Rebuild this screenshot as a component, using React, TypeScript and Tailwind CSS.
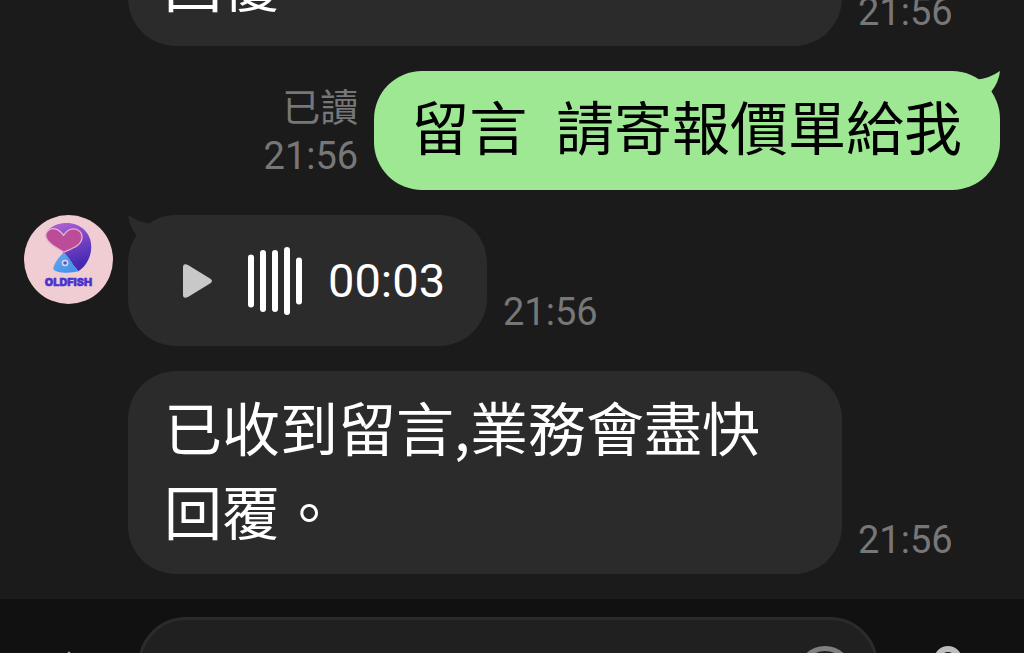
import type { ReactNode } from "react";

function Stamp({ time, read }: { time: string; read?: boolean }) {
  return (
    <div className="flex shrink-0 flex-col items-end pb-2.5 text-[38px] leading-[48px] text-[#777777]">
      {read && <span>已讀</span>}
      <time>{time}</time>
    </div>
  );
}

function Avatar() {
  return (
    <svg viewBox="0 0 90 90" className="size-[89px]" role="img" aria-label="OLDFISH">
      <defs>
        <linearGradient id="body" x1="0" y1="0" x2="0.3" y2="1">
          <stop offset="0" stopColor="#b765d6" />
          <stop offset="0.5" stopColor="#7a45c6" />
          <stop offset="1" stopColor="#4229b0" />
        </linearGradient>
        <linearGradient id="head" x1="0" y1="0" x2="1" y2="1">
          <stop offset="0" stopColor="#62a9f2" />
          <stop offset="1" stopColor="#3f8fe8" />
        </linearGradient>
      </defs>
      <circle cx="45" cy="45" r="45" fill="#f0cdd3" />
      <path
        d="M24.500 15C29 10.500 35.500 8 43 8C57.500 8 68 18.500 68 32C68 42.500 62.500 52 55 57L40 39Z"
        fill="url(#body)"
      />
      <path
        d="M40.500 38C36 41.500 31 48 29.500 54C30 58.500 46 59.500 55 57C50 52 47 44 40.500 38Z"
        fill="url(#head)"
      />
      <path
        d="M40.500 37.500C34 34 23 28.500 22 21.500C21.500 15.500 28 12.500 33 14.500C36 15.500 38 18 40 20.500C42 17.500 44.500 14.500 49 14C55 13.500 59.500 18 58.500 24C57.500 31.500 47 34.500 40.500 37.500Z"
        fill="#bd4c98"
        stroke="#e5b5d2"
        strokeWidth="1.300"
      />
      <circle cx="41.500" cy="48.500" r="2.600" fill="#4b5ac0" stroke="#e4d5ee" strokeWidth="1.500" />
      <text
        x="45"
        y="72"
        textAnchor="middle"
        fontFamily="Inter, sans-serif"
        fontWeight="900"
        fontSize="11"
        fill="#4a32cf"
        stroke="#4a32cf"
        strokeWidth="0.500"
      >
        OLDFISH
      </text>
    </svg>
  );
}

function Bubble({ children, className = "" }: { children: ReactNode; className?: string }) {
  return <div className={`relative rounded-[48px] ${className}`}>{children}</div>;
}

function Received({ avatar, children }: { avatar?: boolean; children: ReactNode }) {
  return (
    <li className="flex items-end gap-4">
      <div className="-mr-0.5 w-[90px] shrink-0 self-start">{avatar && <Avatar />}</div>
      {children}
    </li>
  );
}

function Reply() {
  return (
    <Received>
      <Bubble className="w-[714px] bg-[#2b2b2b] pt-[13px] pr-10 pb-[22px] pl-9 font-['Noto_Sans_CJK_TC',sans-serif] text-[58px] leading-[84px] text-white">
        <p>已收到留言,業務會盡快回覆。</p>
      </Bubble>
      <Stamp time="21:56" />
    </Received>
  );
}

function Composer() {
  return (
    <form className="flex h-[54px] shrink-0 items-start overflow-hidden bg-[#111111] pt-[18px]">
      <button type="button" aria-label="更多" className="mt-[34px] flex w-[138px] shrink-0 justify-center">
        <svg viewBox="0 0 48 48" className="size-12" fill="none" stroke="#a0a0a0" strokeWidth="3" strokeLinecap="round">
          <path d="M24 2V45M3 24H45" />
        </svg>
      </button>
      <div className="flex h-24 min-w-0 flex-1 items-start rounded-[48px] border-[3px] border-[#2b2b2b] bg-[#202020]">
        <input
          aria-label="輸入訊息"
          className="h-20 min-w-0 flex-1 bg-transparent px-9 text-[46px] text-white outline-none"
        />
        <button type="button" aria-label="表情" className="mt-[26px] mr-[22px] shrink-0">
          <svg viewBox="0 0 56 56" className="size-14" fill="none" stroke="#808080" strokeWidth="5">
            <circle cx="28" cy="28" r="25.500" />
            <path d="M18 32C22 40 34 40 38 32" />
          </svg>
        </button>
      </div>
      <button type="button" aria-label="語音" className="mt-[29px] flex w-[146px] shrink-0 justify-center pr-1.5">
        <svg viewBox="0 0 48 56" className="h-14 w-12" fill="none" stroke="#bdbdbd" strokeWidth="6">
          <rect x="13" y="3" width="22" height="32" rx="11" />
          <path d="M5 24V27C5 50 43 50 43 27V24M24 44V54" />
        </svg>
      </button>
    </form>
  );
}

export default function App() {
  return (
    <div className="flex h-screen flex-col overflow-hidden bg-[#1b1b1b] font-[Roboto,'Noto_Sans_CJK_TC',sans-serif]">
      <main className="flex min-h-0 flex-1 flex-col justify-end overflow-hidden">
        <ul className="flex flex-col gap-[25px] px-6 pb-[25px]">
          <Reply />
          <li className="flex items-end justify-end gap-4">
            <Stamp time="21:56" read />
            <Bubble className="bg-[#9ee894] py-[17px] pr-[38px] pl-[37px] text-[58px] leading-[85px] text-black">
              <svg viewBox="0 0 30 30" className="absolute top-0 right-0 size-[30px]" fill="#9ee894">
                <path d="M8 8.500Q19 7.500 30 0Q29 11 21 21L8 21Z" />
              </svg>
              <p className="whitespace-pre">留言  請寄報價單給我</p>
            </Bubble>
          </li>
          <Received avatar>
            <Bubble className="flex h-[131px] w-[359px] items-center bg-[#2b2b2b] pl-[54px] text-white">
              <svg viewBox="0 0 30 30" className="absolute top-0 left-0 size-[30px]" fill="#2b2b2b">
                <path d="M22 8.500Q11 7.500 0 0Q1 11 9 21L22 21Z" />
              </svg>
              <button type="button" aria-label="播放">
                <svg viewBox="0 0 32 36" className="h-9 w-8" fill="#c8c8c8">
                  <path d="M1 4.500Q1 -0.500 6 2L28 15.500Q32 18 28 20.500L6 34Q1 36.500 1 31.500Z" />
                </svg>
              </button>
              <svg viewBox="0 0 56 70" className="ml-8 h-[70px] w-14" stroke="white" strokeWidth="6" strokeLinecap="round">
                <path d="M5 11.500V58.500M17 7V63M29 7V63M41 4V66M53 14.500V55.500" />
              </svg>
              <span className="ml-[26px] text-[47px] leading-none">00:03</span>
            </Bubble>
            <Stamp time="21:56" />
          </Received>
          <Reply />
        </ul>
      </main>
      <Composer />
    </div>
  );
}
